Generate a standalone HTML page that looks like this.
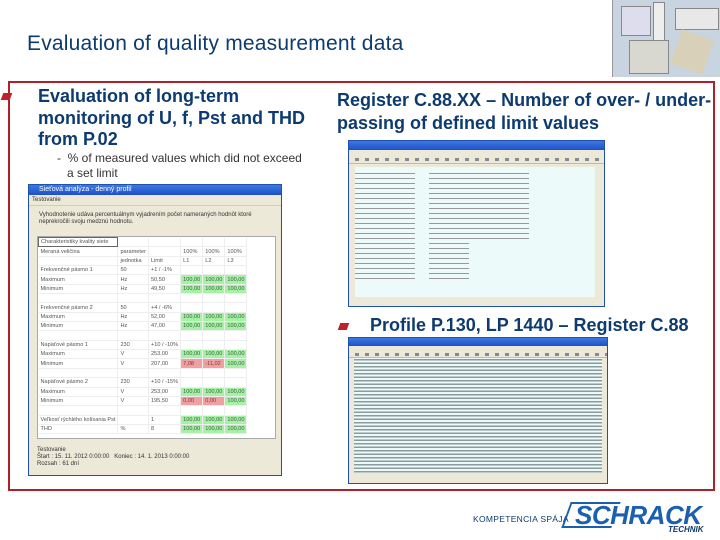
<!DOCTYPE html>
<html><head><meta charset="utf-8"><style>
*{margin:0;padding:0;box-sizing:border-box}
body{width:720px;height:540px;background:#fff;position:relative;overflow:hidden;font-family:"Liberation Sans",sans-serif}
.abs{position:absolute}
h1{position:absolute;left:27px;top:32px;font-size:21px;font-weight:normal;color:#0d3b70;letter-spacing:0.2px}
.frame{left:8px;top:81px;width:707px;height:410px;border:2px solid #b0202a}
.b{color:#0d3b70;font-weight:bold;font-size:18px;line-height:21.5px;white-space:nowrap}
.bul{width:9px;height:7px;background:#c0202a;transform:skewX(-20deg)}
.sub{font-size:12px;color:#333;line-height:15px}
.win{border:1px solid #2050b0;background:#ece9d8}
.tb{height:10px;background:linear-gradient(#3a7ae0,#1f4fc8);color:#fff;font-size:7px;padding-left:10px;line-height:10px}
table{border-collapse:collapse;font-size:5.6px;color:#555}
td{height:9.35px;padding:0 2px;border-right:1px solid #eee;border-bottom:1px solid #eee;white-space:nowrap}
.g{background:#a8f0a8;color:#363}.r{background:#f0a0a0;color:#833}
.tl{background:repeating-linear-gradient(#edfafa 0 2px,#999 2px 3px,#edfafa 3px 5px)}
</style></head><body>
<h1>Evaluation of quality measurement data</h1>
<div class="abs" style="left:612px;top:0;width:108px;height:77px;background:#c8d4e0;border-left:1px solid #999">
 <div class="abs" style="left:8px;top:6px;width:30px;height:30px;background:#dde;border:1px solid #888"></div>
 <div class="abs" style="left:40px;top:2px;width:12px;height:40px;background:#eee;border:1px solid #888"></div>
 <div class="abs" style="left:62px;top:8px;width:44px;height:22px;background:#e8e8e8;border:1px solid #888"></div>
 <div class="abs" style="left:16px;top:40px;width:40px;height:34px;background:#d8d8d0;border:1px solid #888"></div>
 <div class="abs" style="left:62px;top:34px;width:34px;height:36px;background:#d8d0b8;transform:rotate(20deg)"></div>
</div>
<div class="abs frame"></div>
<div class="abs bul" style="left:2px;top:93px"></div>
<div class="abs b" style="left:38px;top:86px">Evaluation of long-term<br>monitoring of U, f, Pst and THD<br>from P.02</div>
<div class="abs sub" style="left:57px;top:151px">-&nbsp; % of measured values which did not exceed<br>&nbsp;&nbsp; a set limit</div>
<div class="abs b" style="left:337px;top:89px;line-height:23px">Register C.88.XX – Number of over- / under-<br>passing of defined limit values</div>
<div class="abs bul" style="left:339px;top:323px"></div>
<div class="abs b" style="left:370px;top:315px">Profile P.130, LP 1440 – Register C.88</div>

<div class="abs win" style="left:28px;top:184px;width:254px;height:292px">
 <div class="tb">Sieťová analýza - denný profil</div>
 <div style="font-size:6px;color:#333;padding:2px 3px;border-bottom:1px solid #ccc">Testovanie</div>
 <div style="font-size:6px;color:#333;padding:6px 10px 0;line-height:7px">Vyhodnotenie udáva percentuálnym vyjadrením počet nameraných hodnôt ktoré<br>neprekročili svoju medznú hodnotu.</div>
 <div class="abs" style="left:8px;top:51px;width:239px;height:203px;background:#fff;border:1px solid #aaa">
 <table>
 <tr><td style="width:73px;border:1px solid #666">Charakteristiky kvality siete</td><td style="width:26px"></td><td style="width:31px"></td><td style="width:18px"></td><td style="width:20px"></td><td style="width:21px"></td></tr>
 <tr><td>Meraná veličina</td><td>parameter</td><td></td><td>100%</td><td>100%</td><td>100%</td></tr>
 <tr><td></td><td>jednotka</td><td>Limit</td><td>L1</td><td>L2</td><td>L3</td></tr>
 <tr><td>Frekvenčné pásmo 1</td><td>50</td><td>+1 / -1%</td><td></td><td></td><td></td></tr>
 <tr><td>Maximum</td><td>Hz</td><td>50,50</td><td class="g">100,00</td><td class="g">100,00</td><td class="g">100,00</td></tr>
 <tr><td>Minimum</td><td>Hz</td><td>49,50</td><td class="g">100,00</td><td class="g">100,00</td><td class="g">100,00</td></tr>
 <tr><td></td><td></td><td></td><td></td><td></td><td></td></tr>
 <tr><td>Frekvenčné pásmo 2</td><td>50</td><td>+4 / -6%</td><td></td><td></td><td></td></tr>
 <tr><td>Maximum</td><td>Hz</td><td>52,00</td><td class="g">100,00</td><td class="g">100,00</td><td class="g">100,00</td></tr>
 <tr><td>Minimum</td><td>Hz</td><td>47,00</td><td class="g">100,00</td><td class="g">100,00</td><td class="g">100,00</td></tr>
 <tr><td></td><td></td><td></td><td></td><td></td><td></td></tr>
 <tr><td>Napäťové pásmo 1</td><td>230</td><td>+10 / -10%</td><td></td><td></td><td></td></tr>
 <tr><td>Maximum</td><td>V</td><td>253,00</td><td class="g">100,00</td><td class="g">100,00</td><td class="g">100,00</td></tr>
 <tr><td>Minimum</td><td>V</td><td>207,00</td><td class="r">7,08</td><td class="r">-11,02</td><td class="g">100,00</td></tr>
 <tr><td></td><td></td><td></td><td></td><td></td><td></td></tr>
 <tr><td>Napäťové pásmo 2</td><td>230</td><td>+10 / -15%</td><td></td><td></td><td></td></tr>
 <tr><td>Maximum</td><td>V</td><td>253,00</td><td class="g">100,00</td><td class="g">100,00</td><td class="g">100,00</td></tr>
 <tr><td>Minimum</td><td>V</td><td>195,50</td><td class="r">0,00</td><td class="r">0,00</td><td class="g">100,00</td></tr>
 <tr><td></td><td></td><td></td><td></td><td></td><td></td></tr>
 <tr><td>Veľkosť rýchlého kolísania Pst</td><td></td><td>1</td><td class="g">100,00</td><td class="g">100,00</td><td class="g">100,00</td></tr>
 <tr><td>THD</td><td>%</td><td>8</td><td class="g">100,00</td><td class="g">100,00</td><td class="g">100,00</td></tr>
 </table></div>
 <div class="abs" style="left:8px;top:262px;font-size:6px;color:#333;line-height:7px">Testovanie<br>Štart : 15. 11. 2012 0:00:00 &nbsp; Koniec : 14. 1. 2013 0:00:00<br>Rozsah : 61 dní</div>
</div>

<div class="abs win" style="left:348px;top:140px;width:257px;height:167px">
 <div class="tb" style="height:9px"></div>
 <div style="height:14px;border-bottom:1px solid #bbb;background:repeating-linear-gradient(90deg,#ece9d8 0 6px,#889 6px 10px) 0 8px/100% 3px no-repeat"></div>
 <div class="abs" style="left:6px;top:26px;width:240px;height:130px;background:#edfafa"></div>
 <div class="abs tl" style="left:6px;top:30px;width:60px;height:110px"></div>
 <div class="abs tl" style="left:80px;top:30px;width:100px;height:70px"></div>
 <div class="abs tl" style="left:80px;top:100px;width:40px;height:40px"></div>
</div>

<div class="abs win" style="left:348px;top:337px;width:260px;height:147px">
 <div class="tb" style="height:8px"></div>
 <div style="height:12px;border-bottom:1px solid #bbb;background:repeating-linear-gradient(90deg,#ece9d8 0 6px,#889 6px 10px) 0 7px/100% 3px no-repeat"></div>
 <div class="abs" style="left:5px;top:20px;width:248px;height:115px;background:repeating-linear-gradient(#edfafa 0 1px,#8a9a9a 1px 2.5px,#edfafa 2.5px 3.5px)"></div>
</div>

<div class="abs" style="left:473px;top:514px;font-size:8.5px;color:#0d3b70;letter-spacing:0.3px">KOMPETENCIA SPÁJA</div>
<div class="abs" style="left:566px;top:502px;width:50px;height:26px;border:2px solid #1a5fb0;border-right:none;transform:skewX(-20deg)"></div>
<div class="abs" style="left:575px;top:500px;font-size:26px;font-weight:bold;font-style:italic;color:#1a5fb0;letter-spacing:-0.5px">SCHRACK</div>
<div class="abs" style="left:668px;top:525px;font-size:8px;font-weight:bold;font-style:italic;color:#0d3b70">TECHNIK</div>
</body></html>
